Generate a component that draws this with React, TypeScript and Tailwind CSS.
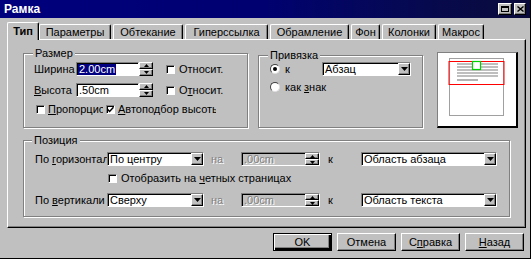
import React from 'react';

const sans = "font-['Liberation_Sans',Arial,sans-serif]";
const raised =
  'border border-t-white border-l-white border-r-black border-b-black shadow-[inset_-1px_-1px_0_#808080]';
const sunken =
  'border border-t-[#808080] border-l-[#808080] border-r-white border-b-white shadow-[inset_1px_1px_0_#000]';
const etched = 'border border-[#808080] shadow-[1px_1px_0_#fff,inset_1px_1px_0_#fff]';
const disabled = 'text-[#808080] [text-shadow:1px_1px_0_#fff]';

function Check({ checked }: { checked?: boolean }) {
  return (
    <span className={`w-[9px] h-[9px] shrink-0 bg-white ${sunken} flex items-center justify-center`}>
      {checked && (
        <svg width="7" height="7" viewBox="0 0 7 7">
          <path d="M0.5 3.2 L2.6 5.4 L6.5 1.2" stroke="#000" strokeWidth="1.5" fill="none" />
        </svg>
      )}
    </span>
  );
}

function Radio({ on }: { on?: boolean }) {
  return (
    <span className="w-[10px] h-[10px] shrink-0 rounded-full bg-white border border-t-[#404040] border-l-[#404040] border-r-[#dfdfdf] border-b-[#dfdfdf] flex items-center justify-center">
      {on && <span className="w-[4px] h-[4px] rounded-full bg-black" />}
    </span>
  );
}

function Arrow({ up }: { up?: boolean }) {
  return (
    <svg width="5" height="3" viewBox="0 0 5 3">
      <path d={up ? 'M0 3 L2.5 0 L5 3Z' : 'M0 0 L5 0 L2.5 3Z'} fill="#000" />
    </svg>
  );
}

function Spin() {
  return (
    <div className="w-[14px] h-full flex flex-col shrink-0">
      <div className={`flex-1 bg-[#c0c0c0] ${raised} flex items-center justify-center`}>
        <Arrow up />
      </div>
      <div className={`flex-1 bg-[#c0c0c0] ${raised} flex items-center justify-center`}>
        <Arrow />
      </div>
    </div>
  );
}

function Select({ value, className }: { value: string; className: string }) {
  return (
    <div className={`h-[14px] bg-white ${sunken} flex items-stretch shrink-0 ${className}`}>
      <span className="flex-1 pl-[2px] flex items-center overflow-hidden whitespace-nowrap">{value}</span>
      <span className={`w-[12px] bg-[#c0c0c0] ${raised} flex items-center justify-center`}>
        <svg width="7" height="4" viewBox="0 0 7 4">
          <path d="M0 0 L7 0 L3.5 4Z" fill="#000" />
        </svg>
      </span>
    </div>
  );
}

function Tab({ label, className, active }: { label: string; className: string; active?: boolean }) {
  return (
    <div
      className={`flex items-center justify-center whitespace-nowrap bg-[#c0c0c0] border-t border-l border-t-white border-l-white border-r border-r-black shadow-[inset_-1px_0_0_#808080] rounded-t-[2px] ${
        active ? 'h-[18px] -mb-px relative z-10 font-bold' : 'h-[15px]'
      } ${className}`}
    >
      {label}
    </div>
  );
}

function Button({ children, isDefault }: { children: React.ReactNode; isDefault?: boolean }) {
  return (
    <div
      className={`w-[59px] h-[18px] flex items-center justify-center bg-[#c0c0c0] ${
        isDefault
          ? 'border border-black shadow-[inset_1px_1px_0_#fff,inset_-2px_-2px_0_#000,inset_-3px_-3px_0_#808080]'
          : raised
      }`}
    >
      {children}
    </div>
  );
}

function Preview() {
  return (
    <div className="w-[81px] h-[76px] -mt-px ml-[14px] bg-white border border-[#808080] border-r-2 border-b-2 border-r-black border-b-black">
      <svg width="78" height="73" viewBox="0 0 78 73">
        <rect x="11.5" y="5.5" width="54" height="57" fill="#fff" stroke="#a0a0a0" />
        {[11, 14, 17, 20, 23].map((y) => (
          <line key={y} x1="19" y1={y} x2="60" y2={y} stroke="#808080" strokeWidth="1.2" />
        ))}
        <line x1="19" y1="27" x2="40" y2="27" stroke="#808080" strokeWidth="1.2" />
        <rect x="11" y="8.5" width="55" height="23" fill="none" stroke="#ff0000" />
        <rect x="34.5" y="8.5" width="8" height="8" fill="#fff" stroke="#00d000" strokeWidth="1.2" />
      </svg>
    </div>
  );
}

export default function App() {
  return (
    <div className={`w-[532px] h-[262px] bg-white text-[11px] leading-none text-black ${sans}`}>
      <div className="w-[531px] h-[259px] bg-[#c0c0c0] border-r border-b border-black flex flex-col">
        {/* заголовок */}
        <div className="h-[18px] shrink-0 bg-linear-to-r from-[#00007e] via-[#000070] to-[#0a0a3a] flex items-center pl-[4px] pr-[4px]">
          <span className="text-white font-bold text-[12px] flex-1">Рамка</span>
          <div className="flex gap-[2px]">
            <div className={`w-[14px] h-[12px] ${raised} bg-[#c0c0c0] flex items-start justify-center pt-[2px]`}>
              <span className="w-[8px] h-[6px] border border-black border-t-2" />
            </div>
            <div className={`w-[12px] h-[12px] ${raised} bg-[#c0c0c0] flex items-center justify-center`}>
              <svg width="7" height="6" viewBox="0 0 7 6">
                <path d="M0.5 0.5 L6.5 5.5 M6.5 0.5 L0.5 5.5" stroke="#000" strokeWidth="1.4" />
              </svg>
            </div>
          </div>
        </div>

        {/* вкладки */}
        <div className="mt-[3px] pl-[7px] h-[18px] flex items-end shrink-0">
          <Tab label="Тип" className="w-[32px]" active />
          <Tab label="Параметры" className="w-[72px]" />
          <Tab label="Обтекание" className="ml-[2px] w-[70px]" />
          <Tab label="Гиперссылка" className="ml-[2px] w-[83px]" />
          <Tab label="Обрамление" className="ml-[2px] w-[79px]" />
          <Tab label="Фон" className="ml-[2px] w-[29px]" />
          <Tab label="Колонки" className="ml-[2px] w-[54px]" />
          <Tab label="Макрос" className="ml-[2px] w-[46px]" />
        </div>

        {/* панель */}
        <div className="ml-[7px] w-[519px] h-[189px] shrink-0 border border-t-white border-l-white border-r-black border-b-black shadow-[inset_-1px_-1px_0_#808080] pl-[15px] pt-[13px]">
          <div className="flex items-start h-[76px]">
            {/* Размер */}
            <div className={`relative w-[225px] h-[75px] ${etched} pl-[10px] pt-[8px]`}>
              <span className="absolute -top-[6px] left-[9px] px-[2px] bg-[#c0c0c0]">Размер</span>
              <div className="flex items-center h-[14px]">
                <span className="w-[42px] overflow-hidden whitespace-nowrap">Ширина</span>
                <div className={`w-[63px] h-full bg-white ${sunken} flex items-center pl-[1px]`}>
                  <span className="bg-[#000080] text-white px-[1px] h-[11px] flex items-center">2.00cm</span>
                </div>
                <Spin />
                <span className="ml-[13px]"><Check /></span>
                <span className="ml-[4px]">Относит.</span>
              </div>
              <div className="flex items-center h-[14px] mt-[7px]">
                <span className="w-[42px] overflow-hidden whitespace-nowrap">
                  <u>В</u>ысота
                </span>
                <div className={`w-[63px] h-full bg-white ${sunken} flex items-center pl-[2px]`}>.50cm</div>
                <Spin />
                <span className="ml-[13px]"><Check /></span>
                <span className="ml-[4px]">
                  О<u>т</u>носит.
                </span>
              </div>
              <div className="flex items-center h-[12px] mt-[6px] pl-[2px]">
                <Check />
                <span className="ml-[3px] w-[55px] overflow-hidden whitespace-nowrap">
                  <u>П</u>ропорционально
                </span>
                <span className="ml-[3px]"><Check checked /></span>
                <span className="ml-[3px] w-[98px] overflow-hidden whitespace-nowrap">
                  <u>А</u>втоподбор высоты
                </span>
              </div>
            </div>

            {/* Привязка */}
            <div className={`relative ml-[10px] mt-[2px] w-[165px] h-[73px] ${etched} pl-[11px] pt-[6px]`}>
              <span className="absolute -top-[6px] left-[9px] px-[2px] bg-[#c0c0c0]">Привязка</span>
              <div className="flex items-center h-[14px]">
                <Radio on />
                <span className="ml-[5px] w-[37px]">к</span>
                <Select value="Абзац" className="w-[89px]" />
              </div>
              <div className="flex items-center h-[12px] mt-[5px]">
                <Radio />
                <span className="ml-[5px]">
                  как <u>з</u>нак
                </span>
              </div>
            </div>

            <Preview />
          </div>

          {/* Позиция */}
          <div className={`relative mt-[11px] w-[487px] h-[77px] ${etched} pl-[11px] pt-[11px]`}>
            <span className="absolute -top-[6px] left-[8px] px-[2px] bg-[#c0c0c0]">Позиция</span>
            <div className="flex items-center h-[14px]">
              <span className="w-[72px] overflow-hidden whitespace-nowrap">
                По <u>г</u>оризонтали
              </span>
              <Select value="По центру" className="w-[97px]" />
              <span className={`ml-[7px] w-[30px] ${disabled}`}>на</span>
              <div className={`w-[79px] h-full bg-[#c0c0c0] ${sunken} flex items-stretch`}>
                <span className={`flex-1 pl-[2px] flex items-center ${disabled}`}>.00cm</span>
                <Spin />
              </div>
              <span className="ml-[8px] w-[33px]">к</span>
              <Select value="Область абзаца" className="w-[136px]" />
            </div>
            <div className="flex items-center h-[11px] mt-[7px] pl-[73px]">
              <Check />
              <span className="ml-[4px]">
                Отобразить на <u>ч</u>етных страницах
              </span>
            </div>
            <div className="flex items-center h-[14px] mt-[9px]">
              <span className="w-[72px] overflow-hidden whitespace-nowrap">
                По <u>в</u>ертикали
              </span>
              <Select value="Сверху" className="w-[97px]" />
              <span className={`ml-[7px] w-[30px] ${disabled}`}>на</span>
              <div className={`w-[79px] h-full bg-[#c0c0c0] ${sunken} flex items-stretch`}>
                <span className={`flex-1 pl-[2px] flex items-center ${disabled}`}>.00cm</span>
                <Spin />
              </div>
              <span className="ml-[8px] w-[33px]">к</span>
              <Select value="Область текста" className="w-[136px]" />
            </div>
          </div>
        </div>

        {/* кнопки */}
        <div className="mt-[5px] pr-[6px] flex justify-end gap-[5px]">
          <Button isDefault>OK</Button>
          <Button>Отмена</Button>
          <Button>
            С<u>п</u>равка
          </Button>
          <Button>
            <u>Н</u>азад
          </Button>
        </div>
      </div>
    </div>
  );
}
